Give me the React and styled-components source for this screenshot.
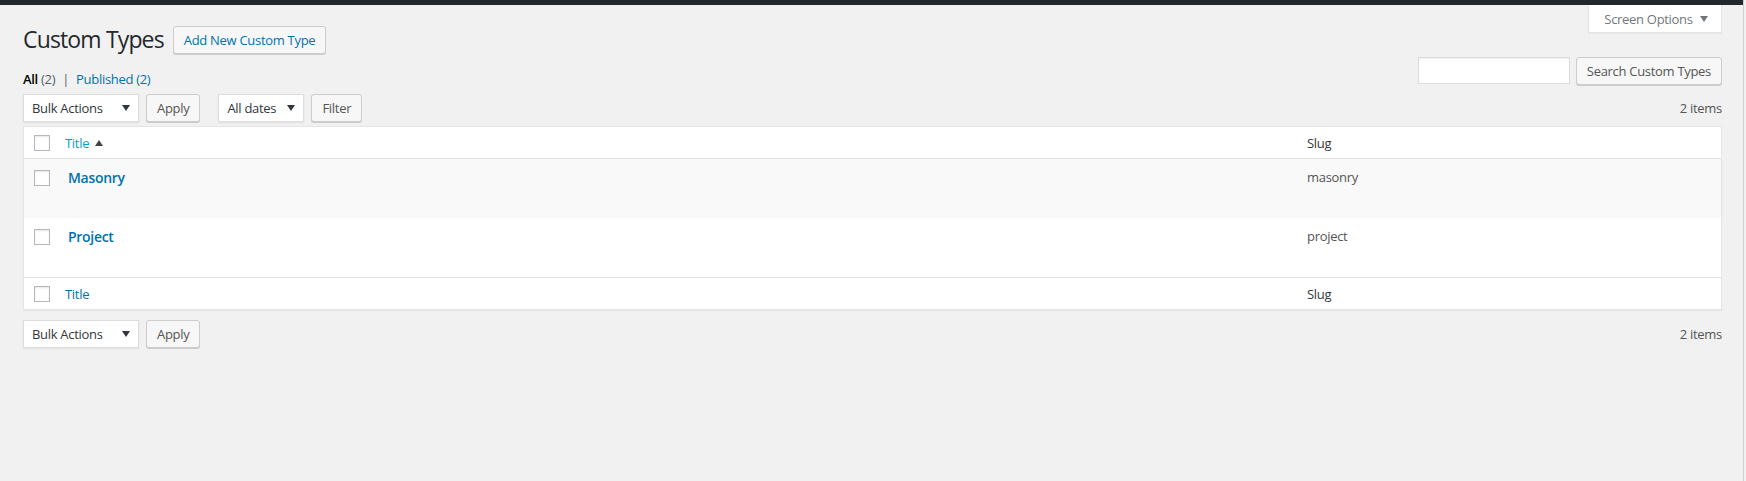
import React from 'react';
import styled, { createGlobalStyle } from 'styled-components';

const GlobalStyle = createGlobalStyle`
    html, body {
        margin: 0;
        padding: 0;
        background: #f1f1f1;
    }

    body {
        font-family: "Open Sans", "Noto Sans", sans-serif;
        font-size: 13px;
        letter-spacing: -0.3px;
        color: #444;
        overflow: hidden;
    }
`;

const rows = [
    { title: 'Masonry', slug: 'masonry' },
    { title: 'Project', slug: 'project' },
];

const Arrow = ({ up, color = '#32373c' }) => (
    <svg width="8" height="6" viewBox="0 0 8 6">
        <polygon points={up ? '0,6 8,6 4,0' : '0,0 8,0 4,6'} fill={color} />
    </svg>
);

const App = () => {
    return (
        <>
            <GlobalStyle />
            <Page>
                <Main>
                    <TopBar />
                    <Wrap>
                        <ScreenOptions>
                            Screen Options <Arrow color="#72777c" />
                        </ScreenOptions>

                        <HeaderRow>
                            <Heading>Custom Types</Heading>
                            <Button $primaryText>Add New Custom Type</Button>
                        </HeaderRow>

                        <FilterBar>
                            <SubSub>
                                <Current>All</Current> <Count>(2)</Count>
                                <Sep>|</Sep>
                                <SubLink>Published <span>(2)</span></SubLink>
                            </SubSub>
                            <SearchBox>
                                <SearchInput />
                                <Button>Search Custom Types</Button>
                            </SearchBox>
                        </FilterBar>

                        <TableNav>
                            <Actions>
                                <SelectBox $width={116}>
                                    Bulk Actions <Arrow />
                                </SelectBox>
                                <Button>Apply</Button>
                                <SelectBox $width={86} $gap={18}>
                                    All dates <Arrow />
                                </SelectBox>
                                <Button>Filter</Button>
                            </Actions>
                            <Items>2 items</Items>
                        </TableNav>

                        <Table>
                            <HeadRow>
                                <CheckCell><CheckBox /></CheckCell>
                                <HeadCell>
                                    <SortLink>Title</SortLink>
                                    <Arrow up color="#444" />
                                </HeadCell>
                                <HeadCell>Slug</HeadCell>
                            </HeadRow>

                            {rows.map((row, i) => (
                                <BodyRow key={row.slug} $alt={i % 2 === 0}>
                                    <CheckCell $body><CheckBox /></CheckCell>
                                    <TitleCell>{row.title}</TitleCell>
                                    <SlugCell>{row.slug}</SlugCell>
                                </BodyRow>
                            ))}

                            <FootRow>
                                <CheckCell><CheckBox /></CheckCell>
                                <HeadCell>
                                    <FootLink>Title</FootLink>
                                </HeadCell>
                                <HeadCell>Slug</HeadCell>
                            </FootRow>
                        </Table>

                        <TableNav $bottom>
                            <Actions>
                                <SelectBox $width={116}>
                                    Bulk Actions <Arrow />
                                </SelectBox>
                                <Button>Apply</Button>
                            </Actions>
                            <Items>2 items</Items>
                        </TableNav>
                    </Wrap>
                </Main>
                <ScrollEdge />
            </Page>
        </>
    );
};

const Page = styled.div`
    display: flex;
    height: 481px;
`;

const Main = styled.div`
    flex: 1;
    min-width: 0;
`;

const ScrollEdge = styled.div`
    width: 2px;
    border-left: 1px solid #cfcfcf;
    background: #f1f1f1;
`;

const TopBar = styled.div`
    height: 5px;
    background: #23282d;
`;

const Wrap = styled.div`
    padding: 0 21px 0 23px;
`;

const ScreenOptions = styled.div`
    float: right;
    box-sizing: border-box;
    width: 134px;
    height: 28px;
    display: flex;
    align-items: center;
    justify-content: center;
    gap: 7px;
    background: #fff;
    border: 1px solid #e5e5e5;
    border-top: none;
    box-shadow: 0 1px 1px rgba(0, 0, 0, 0.04);
    color: #72777c;
    padding-left: 2px;
`;

const HeaderRow = styled.div`
    display: flex;
    align-items: center;
    gap: 9px;
    padding-top: 21px;
    height: 27px;
`;

const Heading = styled.h1`
    margin: 0;
    font-size: 23px;
    font-weight: 400;
    letter-spacing: -0.85px;
    color: #23282d;
    line-height: 27px;
`;

const Button = styled.div`
    box-sizing: border-box;
    height: 28px;
    padding: 0 10px 1px;
    line-height: 26px;
    border: 1px solid #ccc;
    border-radius: 3px;
    background: #f7f7f7;
    box-shadow: 0 1px 0 #ccc;
    color: ${(p) => (p.$primaryText ? '#0073aa' : '#555')};
    white-space: nowrap;
`;

const FilterBar = styled.div`
    clear: both;
    display: flex;
    justify-content: space-between;
    margin-top: 4px;
    height: 28px;
`;

const SubSub = styled.div`
    padding-top: 12px;
    line-height: 20px;
    color: #555d66;
`;

const Current = styled.span`
    color: #000;
    font-weight: 600;
`;

const Count = styled.span`
    color: #555d66;
`;

const Sep = styled.span`
    color: #555d66;
    margin: 0 7px;
`;

const SubLink = styled.span`
    color: #0073aa;
`;

const SearchBox = styled.div`
    display: flex;
    gap: 6px;
`;

const SearchInput = styled.div`
    box-sizing: border-box;
    width: 152px;
    height: 27px;
    background: #fff;
    border: 1px solid #ddd;
    box-shadow: inset 0 1px 2px rgba(0, 0, 0, 0.07);
`;

const TableNav = styled.div`
    display: flex;
    justify-content: space-between;
    align-items: center;
    height: 28px;
    margin-top: ${(p) => (p.$bottom ? '10px' : '9px')};
`;

const Actions = styled.div`
    display: flex;
    align-items: center;
    gap: 7px;
`;

const SelectBox = styled.div`
    box-sizing: border-box;
    width: ${(p) => p.$width}px;
    height: 28px;
    margin-left: ${(p) => (p.$gap ? p.$gap - 7 : 0)}px;
    padding: 0 8px;
    display: flex;
    align-items: center;
    justify-content: space-between;
    background: #fff;
    border: 1px solid #ddd;
    box-shadow: 0 1px 2px rgba(0, 0, 0, 0.07);
    color: #32373c;
`;

const Items = styled.div`
    color: #555;
`;

const Table = styled.div`
    margin-top: 4px;
    background: #fff;
    border: 1px solid #e5e5e5;
    box-shadow: 0 1px 1px rgba(0, 0, 0, 0.04);
`;

const Row = styled.div`
    display: grid;
    grid-template-columns: 33px 1fr 422px;
`;

const HeadRow = styled(Row)`
    height: 31px;
    align-items: center;
    border-bottom: 1px solid #e1e1e1;
`;

const FootRow = styled(Row)`
    height: 31px;
    align-items: center;
    border-top: 1px solid #e1e1e1;
`;

const BodyRow = styled(Row)`
    height: 59px;
    background: ${(p) => (p.$alt ? '#f9f9f9' : '#fff')};
`;

const CheckCell = styled.div`
    padding-left: 10px;
    padding-top: ${(p) => (p.$body ? '11px' : '0')};
    display: flex;
`;

const CheckBox = styled.div`
    box-sizing: border-box;
    width: 16px;
    height: 16px;
    border: 1px solid #b4b9be;
    background: #fff;
    box-shadow: inset 0 1px 2px rgba(0, 0, 0, 0.1);
`;

const HeadCell = styled.div`
    padding-left: 8px;
    display: flex;
    align-items: center;
    gap: 6px;
    color: #32373c;
`;

const SortLink = styled.span`
    color: #00a0d2;
`;

const FootLink = styled.span`
    color: #0073aa;
`;

const TitleCell = styled.div`
    padding: 8px 11px;
    font-size: 14px;
    font-weight: 600;
    color: #0073aa;
    line-height: 21px;
`;

const SlugCell = styled.div`
    padding: 9px 8px;
    line-height: 19px;
    color: #555;
`;

export default App;
